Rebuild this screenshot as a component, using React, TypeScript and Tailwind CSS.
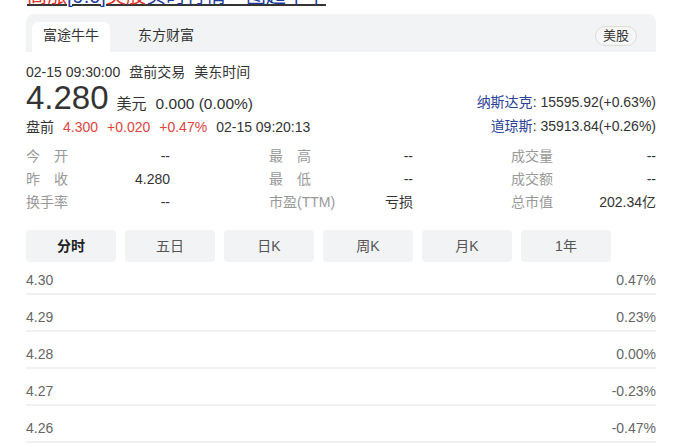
import React from 'react';

const font = { fontFamily: '"Liberation Sans", Arial, "Noto Sans CJK SC", sans-serif' };

const stats = [
  ['今　开', '--', '最　高', '--', '成交量', '--'],
  ['昨　收', '4.280', '最　低', '--', '成交额', '--'],
  ['换手率', '--', '市盈(TTM)', '亏损', '总市值', '202.34亿'],
];

const periods = ['分时', '五日', '日K', '周K', '月K', '1年'];

const rows = [
  ['4.30', '0.47%'],
  ['4.29', '0.23%'],
  ['4.28', '0.00%'],
  ['4.27', '-0.23%'],
  ['4.26', '-0.47%'],
];

export default function App() {
  return (
    <div className="w-[700px] h-[447px] overflow-hidden bg-white text-[#333]" style={font}>
      {/* cut-off headline */}
      <div className="h-[7px] overflow-hidden pl-[27px]">
        <div className="flex text-[20px] leading-[20px] -mt-[14px] underline underline-offset-[1px] decoration-2">
          <span className="text-[#e0312c] decoration-[#e0312c]">高涨</span>
          <span className="text-[#1f3c9e] decoration-[#1f3c9e]">[9.0]</span>
          <span className="text-[#e0312c] decoration-[#e0312c]">美股</span>
          <span className="text-[#1f3c9e] decoration-[#1f3c9e]">实时行情一图超牛牛</span>
        </div>
      </div>

      <div className="ml-[26px] w-[630px]">
        {/* source tabs */}
        <div className="mt-[7px] h-[38px] bg-[#f2f3f5] rounded-t-lg flex items-end pl-[6px] pr-[19px]">
          <div className="w-[78px] h-[30px] bg-white rounded-t-md flex items-center justify-center text-[14px] text-[#333] pb-[4px]">富途牛牛</div>
          <div className="ml-[28px] h-[30px] flex items-center text-[14px] text-[#333] pb-[4px]">东方财富</div>
          <div className="ml-auto mb-[6px] h-[20px] px-[7px] rounded-full border border-[#dcdcdc] bg-[#f7f7f7] flex items-center text-[13px] text-[#333]">美股</div>
        </div>

        {/* quote header */}
        <div className="flex justify-between items-end">
          <div>
            <div className="mt-[10px] text-[14px] leading-[20px] flex gap-[9px]">
              <span>02-15 09:30:00</span>
              <span>盘前交易</span>
              <span>美东时间</span>
            </div>
            <div className="flex items-baseline leading-[32px] h-[32px]">
              <span className="text-[33px] text-[#333]">4.280</span>
              <span className="ml-[8px] text-[15px]">美元</span>
              <span className="ml-[9px] text-[15.5px]">0.000 (0.00%)</span>
            </div>
            <div className="mt-[3px] text-[14px] leading-[20px] flex gap-[9px]">
              <span>盘前</span>
              <span className="text-[#e0443e]">4.300</span>
              <span className="text-[#e0443e]">+0.020</span>
              <span className="text-[#e0443e]">+0.47%</span>
              <span>02-15 09:20:13</span>
            </div>
          </div>
          <div className="text-right text-[14px] leading-[24px] -mb-[1px]">
            <div><span className="text-[#2a4396]">纳斯达克</span>: 15595.92(+0.63%)</div>
            <div><span className="text-[#2a4396]">道琼斯</span>: 35913.84(+0.26%)</div>
          </div>
        </div>

        {/* stats */}
        <div className="mt-[8px] text-[14px] leading-[23px]">
          {stats.map((r, i) => (
            <div key={i} className="flex">
              <span className="w-[86px] text-[#999]">{r[0]}</span>
              <span className="w-[58px] text-right">{r[1]}</span>
              <span className="ml-[99px] w-[86px] text-[#999]">{r[2]}</span>
              <span className="w-[58px] text-right">{r[3]}</span>
              <span className="ml-[98px] w-[86px] text-[#999]">{r[4]}</span>
              <span className="w-[59px] text-right">{r[5]}</span>
            </div>
          ))}
        </div>

        {/* periods */}
        <div className="mt-[16px] flex gap-[9px]">
          {periods.map((p, i) => (
            <div
              key={p}
              className={`w-[90px] h-[32px] rounded bg-[#f2f3f5] flex items-center justify-center text-[14px] ${i === 0 ? 'font-bold text-[#222]' : 'text-[#555]'}`}
            >
              {p}
            </div>
          ))}
        </div>

        {/* chart axis rows */}
        <div>
          {rows.map(([a, b]) => (
            <div key={a} className="pt-[12px] first:pt-[8px] pb-[3px] leading-[20px] flex justify-between border-b-2 border-[#f1f1f1] text-[14px] text-[#666]">
              <span>{a}</span>
              <span>{b}</span>
            </div>
          ))}
        </div>
      </div>
    </div>
  );
}
